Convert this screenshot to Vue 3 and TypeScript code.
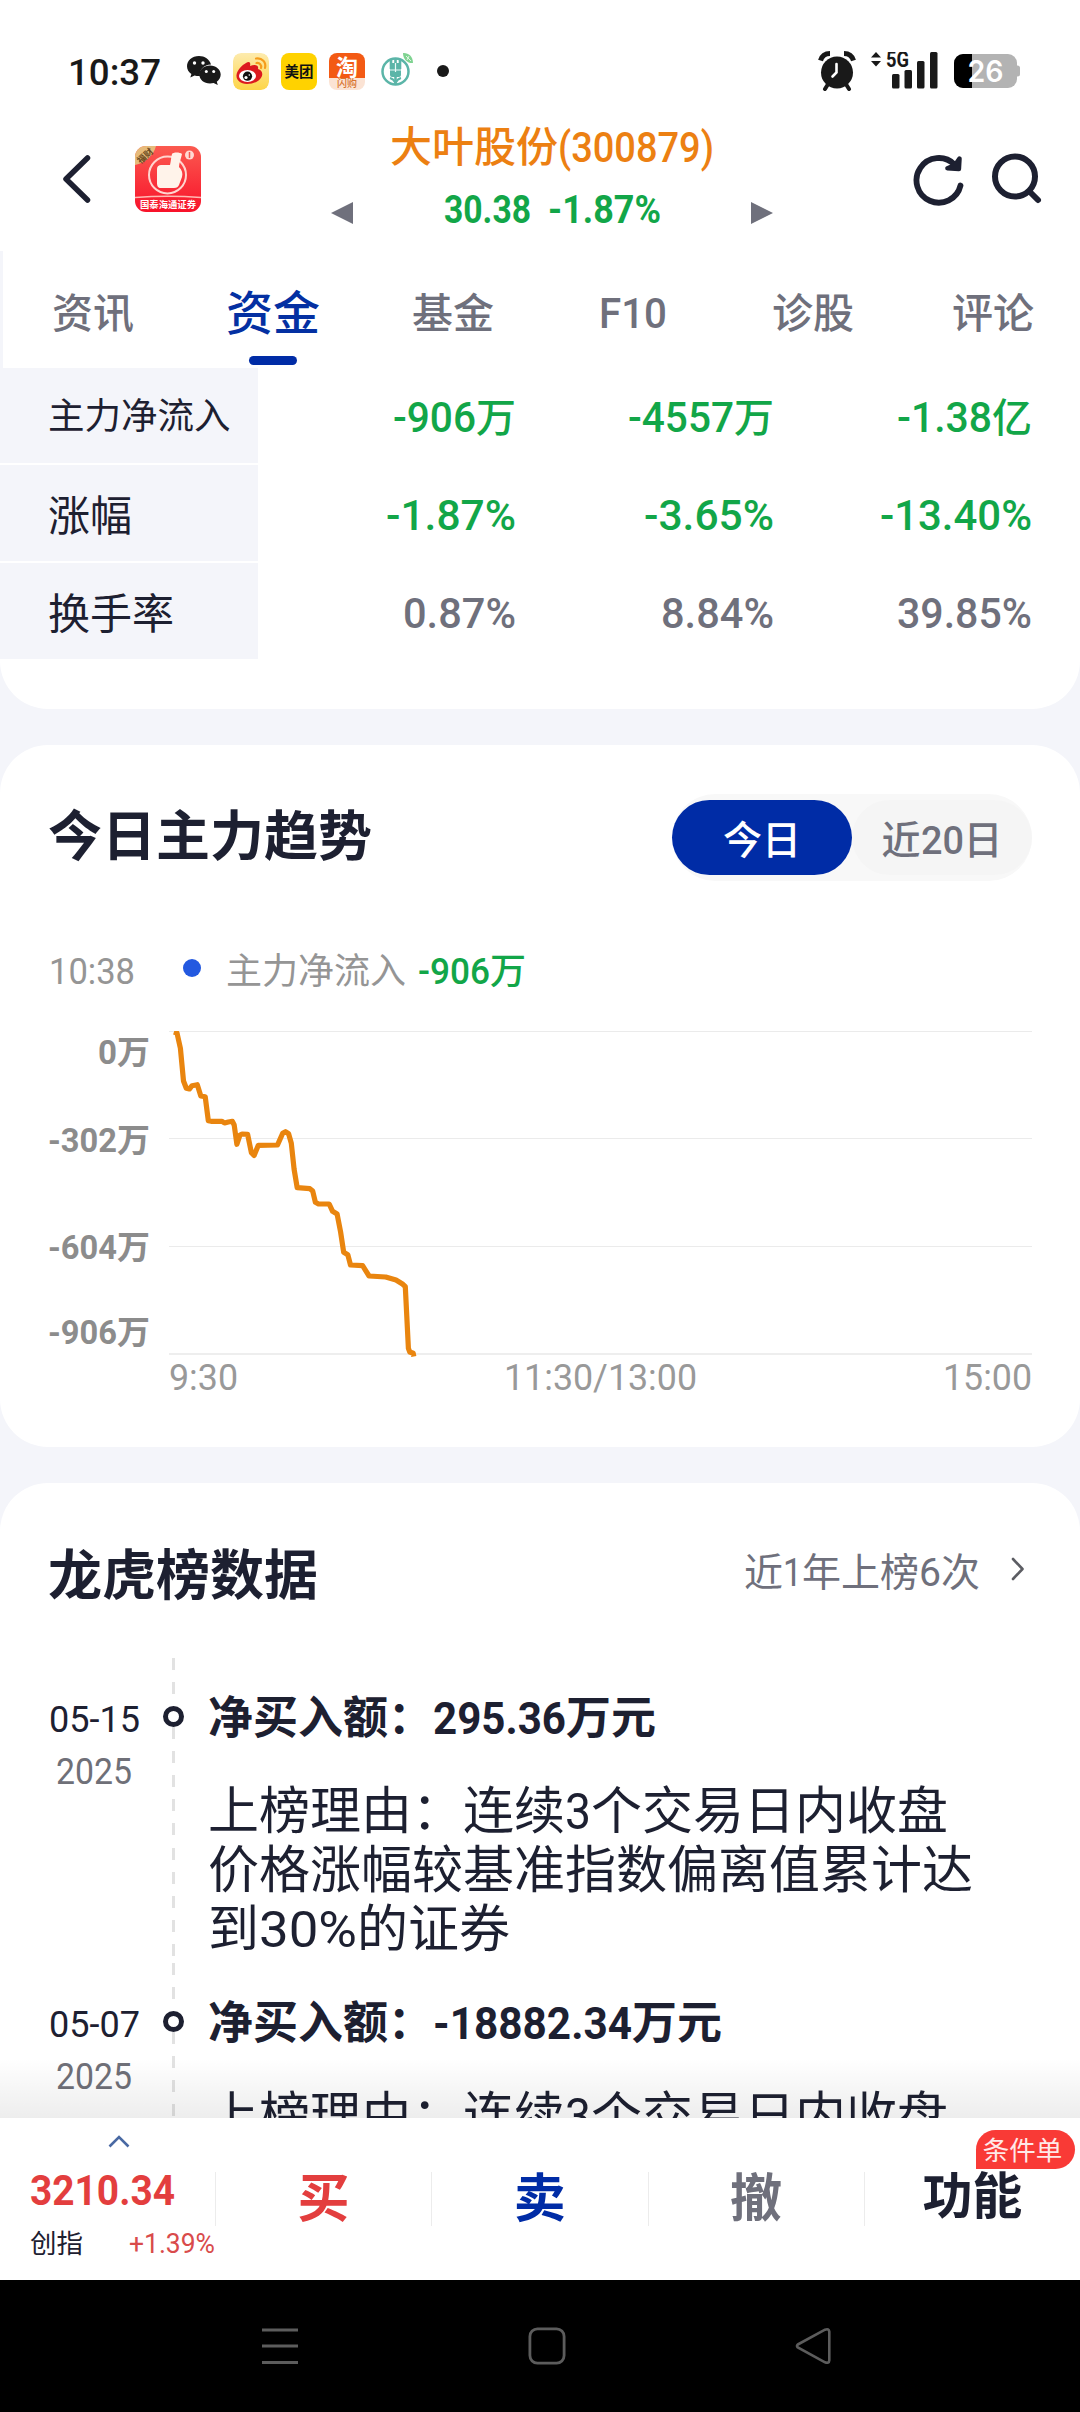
<script setup lang="ts">
import { h, type FunctionalComponent } from 'vue'

type Run = string | [string, number]

// Renders a line of text where numerals are fitted to a fixed advance width.
const Line: FunctionalComponent<{ runs: Run[]; s: number }> = (props) =>
  h(
    'span',
    { class: 'line' },
    props.runs.map((run) =>
      typeof run === 'string'
        ? run
        : h(
            'svg',
            {
              class: 'num',
              width: run[1],
              height: props.s * 0.72,
              style: { fontSize: props.s + 'px' },
            },
            [
              h(
                'text',
                {
                  x: 0,
                  y: props.s * 0.72,
                  textLength: run[1],
                  lengthAdjust: 'spacingAndGlyphs',
                },
                run[0],
              ),
            ],
          ),
    ),
  )
Line.props = ['runs', 's']

const tabs: { label: Run[]; active?: boolean }[] = [
  { label: ['资讯'] },
  { label: ['资金'], active: true },
  { label: ['基金'] },
  { label: [['F10', 68]] },
  { label: ['诊股'] },
  { label: ['评论'] },
]

const rows: { label: string; green: boolean; cells: Run[][] }[] = [
  { label: '主力净流入', green: true, cells: [[['-906', 83], '万'], [['-4557', 106], '万'], [['-1.38', 95], '亿']] },
  { label: '涨幅', green: true, cells: [[['-1.87%', 130]], [['-3.65%', 130]], [['-13.40%', 152]]] },
  { label: '换手率', green: false, cells: [[['0.87%', 113]], [['8.84%', 113]], [['39.85%', 135]]] },
]

const yLabels: Run[][] = [
  [['0', 19], '万'],
  [['-302', 69], '万'],
  [['-604', 69], '万'],
  [['-906', 69], '万'],
]

const trend: [number, number][] = [
  [4.9, 1], [8, 2], [11.4, 17.3], [14.5, 50], [17.3, 57.3], [20.4, 58], [23.1, 54.7], [28.3, 53.7],
  [31.8, 65], [36.2, 65.7], [39.3, 89.7], [42.1, 90.3], [53.1, 90.3], [55.5, 92], [59.3, 91],
  [63.4, 90.3], [65.2, 94], [67.9, 113.3], [71, 104], [73.1, 103], [78.6, 103.3], [82.4, 121.7],
  [85.1, 124.5], [89.3, 114.3], [108.5, 114], [113.7, 102.3], [116.5, 100.7], [119.6, 102.7],
  [122.3, 112.3], [125.1, 138.3], [128.2, 156.7], [140.9, 157.7], [143.7, 160], [146.4, 171.3],
  [149.5, 173], [160.2, 173], [163.6, 180.3], [168.1, 183], [171.6, 201], [174.7, 221.3],
  [178.8, 223.7], [181.5, 234], [193.6, 234.7], [200.1, 245], [216.7, 246], [227, 249],
  [233.9, 253.3], [236.3, 255.7], [239.4, 317.3], [240.8, 321], [244.2, 322.3], [244.8, 325.5],
]
const trendPoints = trend.map((p) => p.join(',')).join(' ')

const reason: Run[][] = [
  ['上榜理由：连续', ['3', 26], '个交易日内收盘'],
  ['价格涨幅较基准指数偏离值累计达'],
  ['到', ['30%', 98], '的证券'],
]

const entries: { date: string; year: string; title: Run[] }[] = [
  { date: '05-15', year: '2025', title: ['净买入额：', ['295.36', 133], '万元'] },
  { date: '05-07', year: '2025', title: ['净买入额：', ['-18882.34', 199], '万元'] },
]
</script>

<template>
  <div class="screen">
    <div class="status">
      <Line class="clock" :runs="[['10:37', 93]]" :s="36" />
      <svg class="wechat" width="36" height="32" viewBox="0 0 36 32">
        <path d="M13 1C6 1 1 5.600 1 11.200c0 3.200 1.700 6 4.400 7.800L4.300 22.500l4.300-2.100c1.600.5 3.400.7 5.400.6-1-6.500 4-11.500 11-11.600C23.500 4.200 18.700 1 13 1z" fill="#191919" />
        <path d="M24 10.500c-6 0-10.700 4-10.700 9s4.700 9 10.700 9c1.300 0 2.500-.2 3.600-.5l4.200 2-1-3.300c2.400-1.700 3.900-4.300 3.900-7.200 0-5-4.700-9-10.700-9z" fill="#191919" />
        <g fill="#fff"><circle cx="8.500" cy="8" r="1.700" /><circle cx="17" cy="8" r="1.700" /><circle cx="20.300" cy="16.500" r="1.500" /><circle cx="27.700" cy="16.500" r="1.500" /></g>
      </svg>
      <svg class="tile" width="36" height="37" viewBox="0 0 36 37">
        <defs><linearGradient id="wb" x1="0" y1="0" x2="0" y2="1"><stop offset="0" stop-color="#fdebae" /><stop offset="1" stop-color="#fdd548" /></linearGradient></defs>
        <rect width="36" height="37" rx="8" fill="url(#wb)" />
        <path d="M13 10c3-2 5-1 4 3 5-2 9-1 8 3 3 1 5 3 4 7-2 5-8 8-15 8S3 27 3.500 22C4 17.500 9 12 13 10z" fill="#dc1a1f" />
        <ellipse cx="14.500" cy="23" rx="8.500" ry="6" fill="#fff" />
        <circle cx="14.500" cy="23.200" r="4.600" fill="#111" /><circle cx="13" cy="24.500" r="1.600" fill="#fff" /><circle cx="16.300" cy="22" r=".8" fill="#fff" />
        <path d="M23 5.500c6-1 10.500 4 9 9.500M23.500 10c3-.5 5.500 2 4.500 5" fill="none" stroke="#f59c1c" stroke-width="2.200" stroke-linecap="round" />
      </svg>
      <div class="tile meituan">美团</div>
      <div class="tile taobao"><span class="tao">淘</span><span class="gou">闪购</span></div>
      <svg class="bank" width="34" height="36" viewBox="0 0 34 36">
        <circle cx="15.500" cy="19.500" r="13" fill="none" stroke="#5bb5a8" stroke-width="2.500" />
        <path d="M11 8v9M20 8v9M15.500 7v26" stroke="#5bb5a8" stroke-width="2.600" fill="none" />
        <rect x="10" y="11" width="11" height="14" rx="2" fill="#5bb5a8" />
        <path d="M15.500 20v-9M10 18h11" stroke="#eafaf7" stroke-width="1.200" />
        <path d="M10 26c2 .5 4 2 5.500 5 1.500-3 3.500-4.500 5.500-5" stroke="#5bb5a8" stroke-width="2" fill="none" />
        <path d="M23 1c5-.5 10 3 10 10-5 .5-10-3-10-10z" fill="#7fd391" /><path d="M26 4l5 5M29 4l-2 4" stroke="#dff7e3" stroke-width="1" />
      </svg>
      <i class="dot" />
      <svg class="alarm" width="38" height="40" viewBox="0 0 38 40">
        <circle cx="19" cy="21.500" r="16" fill="#191919" />
        <path d="M2.500 9.500C4 4.500 7 2.500 12 2.500M35.500 9.500C34 4.500 31 2.500 26 2.500" stroke="#191919" stroke-width="5" fill="none" />
        <path d="M9.500 34l-2.500 4M28.500 34l2.500 4" stroke="#191919" stroke-width="4" stroke-linecap="round" />
        <path d="M18.500 13v8.500l-4 4" stroke="#fff" stroke-width="2.600" fill="none" stroke-linecap="round" />
      </svg>
      <svg class="signal" width="68" height="38" viewBox="0 0 68 38">
        <path d="M6 0l5 5.500H1zM6 14.500L1 9h10z" fill="#191919" />
        <text x="16" y="15.300" textLength="23" lengthAdjust="spacingAndGlyphs" class="fiveg">5G</text>
        <rect x="22" y="22" width="7.500" height="14.500" rx="1.500" /><rect x="34.500" y="18" width="7.500" height="18.500" rx="1.500" />
        <rect x="47" y="9" width="7.500" height="27.500" rx="1.500" /><rect x="60" y="0" width="7.500" height="36.500" rx="1.500" />
      </svg>
      <svg class="battery" width="67" height="34" viewBox="0 0 67 34">
        <defs><clipPath id="bt"><rect width="63" height="34" rx="9" /></clipPath></defs>
        <rect x="60" y="11.500" width="6" height="11" rx="2.500" fill="#b3b3b3" />
        <g clip-path="url(#bt)"><rect width="63" height="34" fill="#b3b3b3" /><rect width="18" height="34" fill="#000" /></g>
        <text x="13.500" y="28" textLength="36" lengthAdjust="spacingAndGlyphs" class="pct">26</text>
      </svg>
    </div>

    <header class="header">
      <svg class="back" width="34" height="52" viewBox="0 0 34 52"><path d="M27.500 5L6 26l21.500 21" fill="none" stroke="#1d2031" stroke-width="5.500" stroke-linecap="round" stroke-linejoin="round" /></svg>
      <svg class="logo" width="66" height="66" viewBox="0 0 66 66">
        <defs>
          <linearGradient id="lg" x1="0" y1="0" x2="0" y2="1"><stop offset="0" stop-color="#fb5a50" /><stop offset="1" stop-color="#f8122a" /></linearGradient>
          <clipPath id="lc"><rect width="66" height="66" rx="11" /></clipPath>
        </defs>
        <g clip-path="url(#lc)">
          <rect width="66" height="66" fill="url(#lg)" />
          <path d="M0 0h21C19 9 10 17 0 19z" fill="#e6bb7a" />
          <text x="2" y="15" transform="rotate(-42 8 12)" class="corner">福财</text>
          <circle cx="32.500" cy="29" r="18.500" fill="none" stroke="#ffd5cf" stroke-width="2" />
          <path d="M35 19c1-4 1-8 2-11 1-2 8-2 10 0-1 5-3 9-3 13 3 3 4 6 3 10l-3 8c-1 2-2 3-5 3H26c-3 0-4-2-4-5V23c0-3 2-4 4-4z" fill="#fff3ea" />
          <circle cx="54.500" cy="9" r="4.500" fill="#ffd9d2" /><path d="M54.500 6v6" stroke="#f4574f" stroke-width="1.500" />
          <path d="M0 51.500Q33 49 66 51.500" stroke="#ffb9b3" stroke-width="1.500" fill="none" />
          <text x="5" y="61.500" textLength="56" lengthAdjust="spacingAndGlyphs" class="brand">国泰海通证券</text>
        </g>
      </svg>
      <div class="quote">
        <div class="name"><Line :runs="['大叶股份', ['(300879)', 156]]" :s="43" /></div>
        <div class="price">
          <svg width="22" height="22" viewBox="0 0 22 22"><path d="M0 11L22 0v22z" fill="#6f707c" /></svg>
          <div class="figures"><Line :runs="[['30.38', 87]]" :s="38" /><Line :runs="[['-1.87%', 113]]" :s="38" /></div>
          <svg width="22" height="22" viewBox="0 0 22 22"><path d="M22 11L0 0v22z" fill="#6f707c" /></svg>
        </div>
      </div>
      <svg class="refresh" width="56" height="56" viewBox="0 0 56 56">
        <path d="M50.500 34.500A22.300 22.300 0 1 1 44.500 13.500" fill="none" stroke="#1d2031" stroke-width="5.800" stroke-linecap="round" />
        <path d="M49.500 7.500l-.6 10.500-11.500-.8L45 14z" fill="#1d2031" stroke="#1d2031" stroke-width="4.500" stroke-linejoin="round" />
      </svg>
      <svg class="search" width="56" height="56" viewBox="0 0 56 56">
        <circle cx="27" cy="25.500" r="20" fill="none" stroke="#1d2031" stroke-width="6" /><path d="M42 41l8 8" stroke="#1d2031" stroke-width="6" stroke-linecap="round" />
      </svg>
    </header>

    <main class="content">
      <nav class="tabs">
        <div v-for="(tab, i) in tabs" :key="i" class="tab" :class="{ active: tab.active }">
          <Line :runs="tab.label" :s="42" />
          <i v-if="tab.active" class="indicator" />
        </div>
      </nav>

      <section class="table">
        <div v-for="row in rows" :key="row.label" class="row">
          <div class="label" :class="{ small: row.label.length > 4 }">{{ row.label }}</div>
          <div v-for="(cell, i) in row.cells" :key="i" class="cell" :class="{ green: row.green }"><Line :runs="cell" :s="42" /></div>
        </div>
      </section>

      <section class="card trend">
        <div class="card-head">
          <h2>今日主力趋势</h2>
          <div class="toggle">
            <span class="on">今日</span>
            <span><Line :runs="['近', ['20', 43], '日']" :s="39" /></span>
          </div>
        </div>
        <div class="legend">
          <Line :runs="[['10:38', 86]]" :s="36.5" />
          <i class="bullet" />
          <span class="series">主力净流入</span>
          <Line class="green" :runs="[['-906', 72], '万']" :s="36.5" />
        </div>
        <div class="chart">
          <div class="y-axis"><Line v-for="(label, i) in yLabels" :key="i" :runs="label" :s="33" /></div>
          <svg class="plot" width="863" height="326" viewBox="0 0 863 326">
            <path d="M0 .5H863M0 107.500H863M0 215.500H863" stroke="#ebebeb" stroke-width="1" />
            <path d="M0 323H863" stroke="#eeeeee" stroke-width="2" />
            <polyline :points="trendPoints" fill="none" stroke="#e9850f" stroke-width="5.200" stroke-linejoin="round" />
          </svg>
        </div>
        <div class="x-axis">
          <Line :runs="[['9:30', 69]]" :s="36.5" />
          <Line :runs="[['11:30/13:00', 193]]" :s="36.5" />
          <Line :runs="[['15:00', 89]]" :s="36.5" />
        </div>
      </section>

      <section class="card board">
        <div class="card-head">
          <h2>龙虎榜数据</h2>
          <div class="more">
            <Line :runs="['近', ['1', 19], '年上榜', ['6', 22], '次']" :s="39" />
            <svg width="14" height="24" viewBox="0 0 14 24"><path d="M2 2l9.500 10L2 22" fill="none" stroke="#5c5d63" stroke-width="2.600" stroke-linecap="round" stroke-linejoin="round" /></svg>
          </div>
        </div>
        <article v-for="entry in entries" :key="entry.date" class="entry">
          <div class="when">
            <Line :runs="[[entry.date, 91]]" :s="36" />
            <Line class="year" :runs="[[entry.year, 76]]" :s="36" />
          </div>
          <div class="axis"><i class="seg first" /><i class="node" /><i class="seg" /></div>
          <div class="body">
            <h3><Line :runs="entry.title" :s="45" /></h3>
            <p v-for="(line, i) in reason" :key="i"><Line :runs="line" :s="50" /></p>
          </div>
        </article>
      </section>
      <div class="shade" />
    </main>

    <footer class="bar">
      <div class="index">
        <svg width="22" height="13" viewBox="0 0 22 13"><path d="M1.500 11.500L11 2l9.500 9.500" fill="none" stroke="#4969a3" stroke-width="2.600" /></svg>
        <div class="points"><Line :runs="[['3210.34', 145]]" :s="43" /></div>
        <div class="change"><span>创指</span><Line :runs="[['+1.39%', 86]]" :s="28" /></div>
      </div>
      <div class="action buy">买</div>
      <div class="action sell">卖</div>
      <div class="action cancel">撤</div>
      <div class="action more-fn">功能<span class="badge">条件单</span></div>
    </footer>

    <div class="sysnav">
      <svg width="36" height="38" viewBox="0 0 36 38"><path d="M0 3h36M0 19h36M0 35.500h36" stroke="#5c5c5c" stroke-width="3.200" /></svg>
      <svg width="38" height="38" viewBox="0 0 38 38"><rect x="1.900" y="1.900" width="34.200" height="34.200" rx="7.500" fill="none" stroke="#5c5c5c" stroke-width="2.800" /></svg>
      <svg width="37" height="38" viewBox="0 0 37 38"><path d="M2.800 17.500L30 2.700q4-1.500 4.300 2v28.600q-.3 3.500-4.300 2L2.800 20.500q-1.500-1.500 0-3z" fill="none" stroke="#5c5c5c" stroke-width="2.600" /></svg>
    </div>
  </div>
</template>

<style>
body {
  margin: 0;
}
.line {
  display: inline-block;
  white-space: nowrap;
}
.num {
  overflow: visible;
  vertical-align: baseline;
}
.num text {
  font-family: Roboto, sans-serif;
  fill: currentColor;
}
</style>

<style scoped>
.screen {
  width: 1080px;
  height: 2412px;
  overflow: hidden;
  display: flex;
  flex-direction: column;
  background: #fff;
  color: #1d2031;
  font-family: 'Noto Sans CJK SC', sans-serif;
}
.screen * {
  box-sizing: border-box;
}
svg {
  flex: none;
}
.status {
  height: 116px;
  flex: none;
  padding: 46px 59px 20px 68px;
  display: flex;
  align-items: center;
}
.clock {
  font-size: 36px;
  line-height: 50px;
  font-weight: 500;
  color: #191919;
  margin-top: -4px;
}
.wechat {
  margin-left: 25px;
}
.tile {
  width: 36px;
  height: 37px;
  border-radius: 8px;
  margin-left: 12px;
  overflow: hidden;
  flex: none;
}
.wechat + .tile {
  margin-left: 11px;
}
.meituan {
  background: #ffd200;
  color: #111;
  font-size: 14.500px;
  line-height: 35px;
  font-weight: 700;
  text-align: center;
}
.taobao {
  background: linear-gradient(#f35a14 0 68%, #fbe3d4 68%);
  display: flex;
  flex-direction: column;
  align-items: center;
}
.tao {
  color: #fff;
  font-size: 22px;
  line-height: 25px;
  font-weight: 700;
}
.gou {
  color: #d8742e;
  font-size: 10px;
  line-height: 10px;
  font-weight: 500;
}
.bank {
  margin-left: 15px;
  margin-top: -2px;
}
.dot {
  width: 12px;
  height: 12px;
  border-radius: 50%;
  background: #191919;
  margin-left: 23px;
}
.alarm {
  margin-left: auto;
}
.signal {
  margin-left: 14px;
  fill: #191919;
}
.fiveg {
  font: 700 21.500px Roboto, sans-serif;
}
.battery {
  margin-left: 16px;
}
.pct {
  font: 600 29.500px Inter, sans-serif;
  fill: #fff;
}
.header {
  height: 135px;
  flex: none;
  display: flex;
  align-items: flex-start;
  padding-left: 60px;
}
.back {
  margin-top: 37px;
}
.logo {
  margin: 30px 0 0 41px;
}
.corner {
  font: 700 9px 'Noto Sans CJK SC', sans-serif;
  fill: #6b4a1e;
}
.brand {
  font: 700 9.500px 'Noto Sans CJK SC', sans-serif;
  fill: #fff;
}
.quote {
  width: 442px;
  margin-left: 130px;
}
.name {
  font-size: 42px;
  line-height: 56px;
  font-weight: 500;
  color: #ec8012;
  text-align: center;
}
.price {
  margin-top: 7px;
  height: 56px;
  display: flex;
  justify-content: space-between;
  align-items: center;
  font-size: 38px;
  line-height: 56px;
  font-weight: 700;
  color: #12a648;
}
.price > svg {
  margin-top: 12px;
}
.figures {
  display: flex;
  gap: 17px;
}
.refresh {
  margin: 35px 0 0 137px;
}
.search {
  margin: 35px 0 0 22px;
}
.content {
  position: relative;
  height: 1867px;
  flex: none;
  overflow: hidden;
  background: #f4f5fa;
}
.tabs {
  display: flex;
  height: 117px;
  border-left: 3px solid #f4f5fa;
  background: #fff;
}
.tab {
  position: relative;
  width: 180px;
  font-size: 41px;
  line-height: 118px;
  text-align: center;
  color: #6f707c;
  font-weight: 500;
}
.tab:last-child {
  width: 177px;
  padding-left: 3px;
}
.tab.active {
  font-size: 47px;
  color: #0430a2;
}
.indicator {
  position: absolute;
  left: 66px;
  bottom: 3px;
  width: 48px;
  height: 9px;
  border-radius: 5px;
  background: #002ca6;
}
.table {
  display: flex;
  flex-direction: column;
  gap: 2px;
  padding-bottom: 50px;
  background: #fff;
  border-radius: 0 0 48px 48px;
}
.row {
  display: flex;
  height: 96px;
  font-size: 40px;
  line-height: 96px;
}
.row:first-child {
  height: 95px;
  line-height: 95px;
}
.label {
  width: 258px;
  padding-left: 48px;
  background: #f4f5fa;
  font-size: 42px;
  white-space: nowrap;
}
.label.small {
  font-size: 36.500px;
  line-height: 92px;
}
.cell {
  width: 258px;
  text-align: right;
  color: #6f707c;
  font-weight: 500;
}
.green,
.cell.green {
  color: #12a648;
  font-weight: 500;
}
.card {
  margin-top: 36px;
  background: #fff;
  border-radius: 48px;
}
.trend {
  height: 702px;
}
.board {
  height: 900px;
}
.card-head {
  display: flex;
  align-items: center;
  justify-content: space-between;
  padding: 0 48px;
  height: 185px;
}
h2 {
  margin: 0 0 9px;
  font-size: 54px;
  line-height: 70px;
  font-weight: 700;
}
.toggle {
  display: flex;
  align-items: center;
  width: 360px;
  height: 87px;
  border-radius: 44px;
  background: #f8f8f8;
  font-size: 39px;
  line-height: 75px;
}
.toggle > span {
  width: 180px;
  height: 75px;
  border-radius: 38px;
  background: #f5f5f5;
  color: #6f707c;
  text-align: center;
  font-weight: 500;
}
.toggle > .on {
  background: #002ca6;
  color: #fff;
}
.legend {
  height: 76px;
  padding-left: 49px;
  display: flex;
  align-items: center;
  font-size: 36px;
  line-height: 76px;
  color: #959595;
}
.bullet {
  width: 18px;
  height: 18px;
  border-radius: 50%;
  background: #2359e0;
  margin-left: 48px;
}
.series {
  margin: 0 12px 0 25px;
}
.chart {
  display: flex;
  height: 323px;
  margin-top: 25px;
}
.y-axis {
  width: 150px;
  display: flex;
  flex-direction: column;
  align-items: flex-end;
  font-size: 33px;
  line-height: 38px;
  font-weight: 700;
  color: #8c8c8c;
}
.y-axis > :nth-child(2) {
  margin-top: 50px;
}
.y-axis > :nth-child(3) {
  margin-top: 69px;
}
.y-axis > :nth-child(4) {
  margin-top: 47px;
}
.plot {
  margin-left: 19px;
}
.x-axis {
  margin: 0 48px 0 169px;
  display: grid;
  grid-template-columns: 1fr auto 1fr;
  font-size: 36.500px;
  line-height: 42px;
  color: #999;
}
.x-axis > :last-child {
  text-align: right;
}
.board .card-head {
  height: 175px;
}
.board h2 {
  margin: 3px 0 0;
}
.more {
  display: flex;
  align-items: center;
  gap: 31px;
  padding-right: 7px;
  margin-bottom: 3px;
  font-size: 39px;
  line-height: 60px;
  color: #6f707c;
}
.entry {
  display: flex;
  height: 305px;
  padding-left: 48px;
}
.when {
  width: 92px;
  padding-top: 32px;
  display: flex;
  flex-direction: column;
  align-items: center;
  font-size: 36px;
  line-height: 52px;
}
.year {
  color: #6f7078;
}
.axis {
  width: 21px;
  margin-left: 23px;
  display: flex;
  flex-direction: column;
  align-items: center;
}
.seg {
  width: 3px;
  flex: 1;
  background: repeating-linear-gradient(#e2e2e2 0 12px, transparent 12px 24.100px);
}
.seg.first {
  flex: none;
  height: 48px;
}
.node {
  width: 21px;
  height: 21px;
  flex: none;
  border: 5px solid #1d2031;
  border-radius: 50%;
}
.body {
  margin-left: 24px;
  padding-top: 25px;
}
h3 {
  margin: 0 0 31px;
  font-size: 45px;
  line-height: 64px;
  font-weight: 700;
}
p {
  margin: 0;
  font-size: 51px;
  line-height: 59px;
  height: 59px;
}
.shade {
  position: absolute;
  left: 0;
  right: 0;
  bottom: 0;
  height: 60px;
  background: linear-gradient(rgba(0, 0, 0, 0), rgba(0, 0, 0, 0.07));
}
.bar {
  height: 162px;
  flex: none;
  display: flex;
  background: #fff;
}
.index {
  width: 215px;
  padding: 17px 0 0 30px;
  display: flex;
  flex-direction: column;
}
.index > svg {
  margin-left: 78px;
}
.points {
  margin-top: 10px;
  font-size: 43px;
  line-height: 56px;
  font-weight: 700;
  color: #e33e3e;
}
.change {
  margin-top: 10px;
  display: flex;
  justify-content: space-between;
  font-size: 26.500px;
  line-height: 36px;
}
.change > :last-child {
  color: #d94b4b;
}
.action {
  position: relative;
  width: 216.250px;
  height: 54px;
  margin-top: 54px;
  border-left: 1px solid #ececec;
  text-align: center;
  font-size: 52px;
  line-height: 46px;
  font-weight: 700;
}
.buy {
  color: #e33e3e;
}
.sell {
  color: #002ca6;
}
.cancel {
  color: #6f707c;
}
.more-fn {
  font-size: 50px;
  line-height: 40px;
}
.badge {
  position: absolute;
  left: 111px;
  top: -42px;
  width: 99px;
  height: 39px;
  padding-left: 7px;
  border-radius: 20px 20px 20px 0;
  background: #f93a36;
  color: #ffe9e8;
  font-size: 26.500px;
  line-height: 38px;
  font-weight: 400;
  text-align: left;
  white-space: nowrap;
}
.sysnav {
  height: 132px;
  flex: none;
  background: #000;
  display: flex;
  align-items: center;
  padding: 0 248px 0 262px;
  justify-content: space-between;
}
</style>
